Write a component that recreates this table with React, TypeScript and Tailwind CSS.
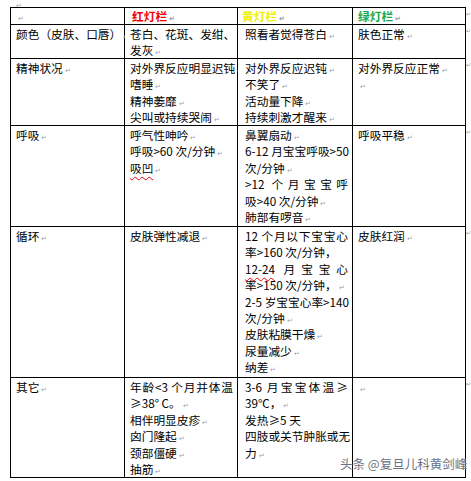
import React from "react";

type Line = { t: React.ReactNode; j?: boolean; p?: boolean };

const Mark = () => (
  <span className="ml-[2px] text-[7px] leading-none text-gray-400">↵</span>
);

const Wavy = ({ children }: { children: React.ReactNode }) => (
  <span className="underline decoration-wavy decoration-red-600 decoration-1 underline-offset-[3px]">
    {children}
  </span>
);

const Cell = ({ lines, pl = "pl-[5px]" }: { lines: Line[]; pl?: string }) => (
  <div className={`bg-white pt-[1px] pr-[4px] ${pl}`}>
    {lines.map((l, i) => (
      <div
        key={i}
        className={`whitespace-nowrap ${l.j ? "text-justify [text-align-last:justify]" : ""}`}
      >
        {l.t}
        {l.p !== false && !l.j && <Mark />}
      </div>
    ))}
  </div>
);

const rows: Line[][][] = [
  [
    [{ t: "颜色（皮肤、口唇）" }],
    [{ t: "苍白、花斑、发绀、", p: false }, { t: "发灰" }],
    [{ t: "照看者觉得苍白" }],
    [{ t: "肤色正常" }],
  ],
  [
    [{ t: "精神状况" }],
    [{ t: "对外界反应明显迟钝" }, { t: "嗜睡" }, { t: "精神萎靡" }, { t: "尖叫或持续哭闹" }],
    [{ t: "对外界反应迟钝" }, { t: "不笑了" }, { t: "活动量下降" }, { t: "持续刺激才醒来" }],
    [{ t: "对外界反应正常" }, { t: "" }],
  ],
  [
    [{ t: "呼吸" }],
    [{ t: "呼气性呻吟" }, { t: "呼吸>60 次/分钟" }, { t: <Wavy>吸凹</Wavy> }],
    [
      { t: "鼻翼扇动" },
      { t: "6-12 月宝宝呼吸>50", p: false },
      { t: "次/分钟" },
      { t: ">12 个月宝宝呼", j: true },
      { t: "吸>40 次/分钟" },
      { t: "肺部有啰音" },
    ],
    [{ t: "呼吸平稳" }],
  ],
  [
    [{ t: "循环" }],
    [{ t: "皮肤弹性减退" }],
    [
      { t: "12 个月以下宝宝心", j: true },
      { t: "率>160 次/分钟，", p: false },
      { t: <><Wavy>12-24</Wavy> 月宝宝心</>, j: true },
      { t: "率>150 次/分钟，" },
      { t: "2-5 岁宝宝心率>140", p: false },
      { t: "次/分钟" },
      { t: "皮肤粘膜干燥" },
      { t: "尿量减少" },
      { t: "纳差" },
    ],
    [{ t: "皮肤红润" }],
  ],
  [
    [{ t: "其它" }],
    [
      { t: "年龄<3 个月并体温", j: true },
      { t: "≥38° C。" },
      { t: "相伴明显皮疹" },
      { t: "囟门隆起" },
      { t: "颈部僵硬" },
      { t: "抽筋" },
    ],
    [
      { t: "3-6 月宝宝体温≥", j: true },
      { t: "39℃，" },
      { t: "发热≥5 天", p: false },
      { t: "四肢或关节肿胀或无", p: false },
      { t: "力" },
    ],
    [{ t: "" }],
  ],
];

const pads = ["pl-[5px]", "pl-[5px]", "pl-[7px]", "pl-[5px]"];

export default function App() {
  return (
    <div
      className="relative w-[471px] h-[481px] overflow-hidden bg-white pl-[10px] pt-[7px] text-[11.7px] leading-[16.4px] text-black"
      style={{ fontFamily: '"Noto Sans CJK SC", "Liberation Sans", sans-serif' }}
    >
      <span className="absolute left-[16px] top-[-3px] text-[7px] text-gray-400">↵</span>

      <div className="grid w-[456px] grid-cols-[113px_112px_114px_112px] grid-rows-[16px_33px_66px_100px_150px_99px] gap-px bg-black p-px">
        {/* header */}
        <div className="bg-white pl-[5px] leading-[16px]">
          <Mark />
        </div>
        <div className="bg-white pl-[7px] font-bold leading-[16px] text-[#f00000]">
          红灯栏
          <Mark />
        </div>
        <div className="bg-white pl-[4px] font-bold leading-[16px] text-[#f0f000]">
          黄灯栏
          <Mark />
        </div>
        <div className="bg-white pl-[5px] font-bold leading-[16px] text-[#1aa84a]">
          绿灯栏
          <Mark />
        </div>

        {rows.map((row, ri) =>
          row.map((lines, ci) => <Cell key={`${ri}-${ci}`} lines={lines} pl={pads[ci]} />)
        )}
      </div>

      {/* row end marks outside the table */}
      <div className="absolute left-[466px] top-[10px] flex flex-col text-[6px] leading-[8px] text-gray-400">
        <span className="h-[17px]">↵</span>
        <span className="h-[34px]">↵</span>
        <span className="h-[67px]">↵</span>
        <span className="h-[101px]">↵</span>
        <span className="h-[151px]">↵</span>
        <span>↵</span>
      </div>

      {/* watermark */}
      <div className="absolute left-[340px] top-[456px] text-[12.5px] leading-[16px] text-gray-500 [text-shadow:0_0_2px_#fff]">
        头条 @复旦儿科黄剑峰
      </div>
    </div>
  );
}
